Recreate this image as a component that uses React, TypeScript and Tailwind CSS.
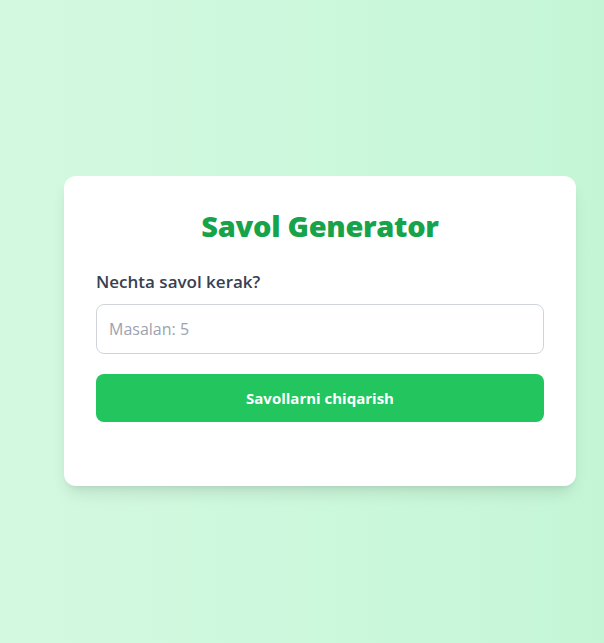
export default function App() {
  return (
    <div
      className="min-h-screen flex items-center justify-center bg-gradient-to-r from-[#d4f9e1] to-[#c4f6d6] pl-[36px] pt-[18px]"
      style={{ fontFamily: '"Open Sans", "Noto Sans", sans-serif' }}
    >
      <div className="w-full max-w-lg bg-white rounded-xl shadow-lg px-8 pt-8 pb-16">
        <h1 className="text-[29px] leading-9 font-extrabold text-[#16a34a] text-center mb-6 tracking-[-0.3px]">
          Savol Generator
        </h1>
        <label className="block text-[17px] leading-7 font-semibold text-[#374151] mb-2">Nechta savol kerak?</label>
        <input
          type="number"
          placeholder="Masalan: 5"
          className="w-full border border-[#d1d5db] rounded-lg px-3 py-3 text-base leading-6 placeholder:text-[#9ca3af] outline-none"
        />
        <button className="mt-5 w-full bg-[#22c55e] text-white font-bold text-[15px] rounded-lg py-3 leading-6">
          Savollarni chiqarish
        </button>
      </div>
    </div>
  )
}
